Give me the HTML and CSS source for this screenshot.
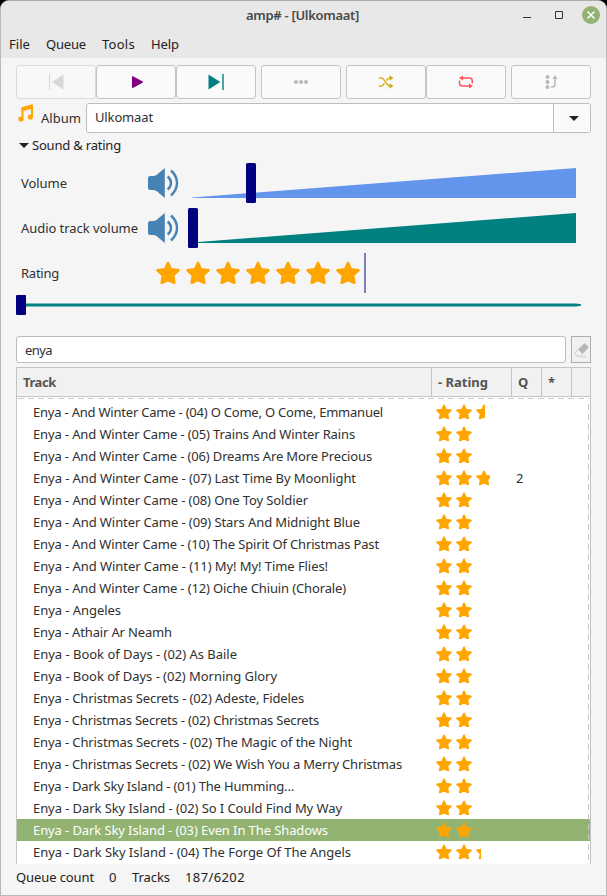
FILE: index.html
```html
<!DOCTYPE html>
<html lang="en">
<head>
<meta charset="utf-8">
<title>amp# - [Ulkomaat]</title>
<link rel="stylesheet" href="styles.css">
</head>
<body>
<svg class="defs" width="0" height="0" aria-hidden="true">
  <symbol id="star" viewBox="0 0 24 24"><path d="M12 2 14.800 8.300 22.500 9.400 17.100 14.300 18.300 21.700 12 19 5.700 21.700 6.900 14.300 1.500 9.400 9.200 8.300Z" fill="#ffa500" stroke="#ffa500" stroke-width="2.600" stroke-linejoin="round"/></symbol>
  <symbol id="speaker" viewBox="0 0 32 32"><path d="M1 11.500Q1 9 3.500 9H6Q8 9 9.500 8L17.800 1V31L9.500 24Q8 23 6 23H3.500Q1 23 1 20.500Z" fill="#4682b4"/><path d="M20.700 9.500Q24 12.500 24 16T20.700 22.500M24 3.500Q30 9 30 16T24 28.500" fill="none" stroke="#4682b4" stroke-width="2.400"/></symbol>
</svg>
<div class="window">
  <header class="titlebar">
    <h1 class="title">amp# - [Ulkomaat]</h1>
    <div class="controls">
      <svg width="72" height="20" viewBox="0 0 72 20"><path d="M0 12.500H8" stroke="#333"/><path d="M32.500 6.500H39.500V13.500H32.500Z" fill="none" stroke="#333"/></svg>
      <svg class="close" width="18" height="18" viewBox="0 0 18 18"><circle cx="9" cy="9" r="9" fill="#92b372"/><path d="M5.500 5.500 12.500 12.500M12.500 5.500 5.500 12.500" stroke="#fff" stroke-width="1.500"/></svg>
    </div>
  </header>
  <nav class="menu"><span class="m1">File</span><span class="m2">Queue</span><span class="m3">Tools</span><span class="m4">Help</span></nav>
  <main class="content">
    <div class="toolbar">
      <button class="tool dim"><svg width="16" height="16"><path d="M1.500 0V16" stroke="#d5d8d4"/><path d="M15.500 0.500V15.500L4 8Z" fill="#d5d8d4"/></svg></button>
      <button class="tool"><svg width="16" height="16"><path d="M4.500 2.500 14.800 8.100 4.500 13.700Z" fill="#800080" stroke="#800080" stroke-linejoin="round"/></svg></button>
      <button class="tool gap"><svg width="16" height="16"><path d="M0.500 0.500 12.300 8 0.500 15.500Z" fill="#008080"/><path d="M15 0V16" stroke="#008080" stroke-width="1.400"/></svg></button>
      <button class="tool gap"><svg width="16" height="16" fill="#b4bab3"><circle cx="3" cy="8" r="2"/><circle cx="8" cy="8" r="2"/><circle cx="13" cy="8" r="2"/></svg></button>
      <button class="tool"><svg width="16" height="16"><path d="M0.800 4H3C7 4 8 12 12 12M0.800 12H3C4.500 12 5.500 11 6.500 9.500M8.500 6.500Q10 4 12 4" fill="none" stroke="#dbb21c" stroke-width="1.500"/><path d="M11.500 1.200 15.500 4 11.500 6.800ZM11.500 9.200 15.500 12 11.500 14.800Z" fill="#d5ac10"/></svg></button>
      <button class="tool gap"><svg width="16" height="16"><path d="M4 4H11.500Q14.300 4 14.300 7V9.500M12 12H4.500Q1.500 12 1.500 9V6.500" fill="none" stroke="#ff5757" stroke-width="1.500"/><path d="M5 1.500 1 4 5 6.500ZM11 9.500 15 12 11 14.500Z" fill="#ff5757"/></svg></button>
      <button class="tool"><svg width="16" height="16" fill="#b4bab3"><circle cx="4.500" cy="3" r="2"/><circle cx="4.500" cy="8" r="2"/><circle cx="4.500" cy="13" r="2"/><path d="M8 13H9Q12 13 12 10V4" fill="none" stroke="#b4bab3" stroke-width="1.500"/><path d="M9.500 5 12 1 14.500 5Z"/></svg></button>
    </div>
    <div class="album">
      <svg class="note" width="20" height="20" viewBox="0 0 20 20"><path d="M6.500 15V5.500L16 3V13" fill="none" stroke="#ffa500" stroke-width="2"/><path d="M5.500 5Q5.500 4.200 6.500 3.900L15.500 1.600Q17 1.300 17 2.500V5.500L5.500 8.500Z" fill="#ffa500"/><circle cx="5" cy="16" r="2.600" fill="#ffa500"/><circle cx="14.400" cy="14" r="2.600" fill="#ffa500"/></svg>
      <label class="album-label">Album</label>
      <div class="combo"><span class="combo-text">Ulkomaat</span><span class="combo-button"><i class="arrow"></i></span></div>
    </div>
    <div class="expander"><i class="arrow"></i><span>Sound &amp; rating</span></div>
    <section class="sliders">
      <div class="slider-row"><span class="slider-name n1">Volume</span><svg class="speaker" width="32" height="32"><use href="#speaker"/></svg><svg class="wedge" width="390" height="40"><path d="M4 34.400 388 5V35H4Z" fill="#6495ed"/><rect x="58" y="0" width="10" height="40" rx="1.500" fill="#000080"/></svg></div>
      <div class="slider-row"><span class="slider-name n2">Audio track volume</span><svg class="speaker" width="32" height="32"><use href="#speaker"/></svg><svg class="wedge" width="390" height="40"><path d="M4 34.400 388 5V35H4Z" fill="#008080"/><rect x="0" y="0" width="10" height="40" rx="1.500" fill="#000080"/></svg></div>
      <div class="slider-row"><span class="slider-name n3">Rating</span><div class="big-stars" id="bigStars"></div></div>
    </section>
    <svg class="progress" width="575" height="20"><path d="M5 8.500H560L565 9.300V10.700L560 11.500H5Z" fill="#008080"/><rect x="0" y="0" width="10" height="20" rx="1" fill="#000080"/></svg>
    <div class="search"><div class="search-field">enya</div><button class="erase"><svg width="18" height="20" viewBox="0 0 18 20"><path d="M6 9.500 12 3.500Q12.700 3 13.300 3.500L16.300 6.700Q16.800 7.300 16.300 8L10.300 14Z" fill="#b4bab3"/><path d="M5.800 9.800 3 12.800Q2.500 13.500 3 14L5.300 16.300H8L10 14.300M9 16.800H14" fill="none" stroke="#c2c7c1" stroke-width="1"/></svg></button></div>
    <section class="table">
      <div class="head"><span>Track</span><span>- Rating</span><span>Q</span><span>*</span><span></span></div>
      <div class="body" id="rows"></div>
    </section>
    <footer class="status"><span class="s1">Queue count</span><span class="s2">0</span><span class="s3">Tracks</span><span class="s4">187/6202</span></footer>
  </main>
</div>
<script src="app.js"></script>
</body>
</html>
```
FILE: styles.css
```css
* { box-sizing: border-box; }
body { margin: 0; background: #000; color: #303030; font: 13px/20px "Noto Sans", sans-serif; overflow: hidden; }
svg { display: block; flex: none; }
.defs { position: absolute; }
.window { width: 607px; height: 896px; border: 1px solid #b9b9b9; border-top: 1px solid #acacac; border-radius: 9px 9px 0 0; background: #f5f5f5; overflow: hidden; }
.titlebar { height: 29px; background: #e8e8e8; display: flex; position: relative; }
.title { flex: 1; margin: 0; padding-right: 2px; font-size: 13px; line-height: 29px; font-weight: 600; text-align: center; color: #484848; }
.controls { position: absolute; left: 522px; top: 4px; display: flex; }
.close { margin-left: -13px; margin-top: 1px; }
.menu { height: 28px; background: #e8e8e8; display: flex; padding: 4px 0 0 8px; color: #222; }
.menu span { flex: none; white-space: nowrap; }
.m1 { width: 37px; } .m2 { width: 56px; } .m3 { width: 49px; }
.content { padding: 7px 15px 0; display: flex; flex-direction: column; }
.toolbar { display: flex; height: 34px; }
.tool { width: 80px; height: 34px; flex: none; padding: 0; border: 1px solid #c5c5c5; border-radius: 3px; background: #fafafa; display: flex; align-items: center; justify-content: center; }
.tool.dim { border-color: #dcdcdc; background: #f8f8f8; }
.tool.gap { margin-right: 5px; }
.album { display: flex; height: 30px; margin-top: 4px; }
.note { margin: 0 5px 0 0; }
.album-label { width: 45px; padding-top: 5px; flex: none; }
.combo { flex: 1; display: flex; border: 1px solid #bdbdbd; border-radius: 3px; background: #fff; overflow: hidden; }
.combo-text { flex: 1; padding: 3px 8px; }
.combo-button { width: 37px; border-left: 1px solid #bdbdbd; background: #fafafa; display: flex; align-items: center; justify-content: center; padding-left: 4px; }
.arrow { border: 5px solid transparent; border-top-color: #222; border-bottom: 0; }
.expander { height: 20px; margin: 2px 0 0 3px; display: flex; align-items: center; gap: 3px; color: #222; }
.sliders { padding: 8px 0 0 5px; }
.slider-row { height: 45px; display: flex; align-items: flex-start; }
.slider-name { width: 126px; padding-top: 10px; flex: none; white-space: nowrap; }
.speaker { margin-top: 4px; }
.wedge { margin-left: 9px; }
.big-stars { display: flex; height: 40px; padding: 8px 4px 0 9px; border-right: 2px solid #7f7fc0; gap: 6px; }
.progress { margin-top: -3px; }
.search { display: flex; height: 27px; margin-top: 21px; gap: 5px; }
.search-field { flex: 1; border: 1px solid #bdbdbd; border-radius: 3px; background: #fff; padding: 3px 8px; }
.erase { width: 20px; padding: 0; border: 1px solid #adadad; background: #f1f1f1; display: flex; align-items: center; justify-content: center; }
.table { height: 497px; margin-top: 4px; border: 1px solid #c4c4c4; border-bottom: 0; background: #fff; display: flex; flex-direction: column; }
.head { height: 29px; flex: none; display: grid; grid-template-columns: 415px 80px 30px 30px 1fr; background: #f1f1f1; border-bottom: 1px solid #c4c4c4; color: #555; font-weight: 700; line-height: 29px; }
.head span { border-right: 1px solid #c4c4c4; padding-left: 6px; white-space: nowrap; }
.head span:last-child { border: 0; }
.body { flex: 1; overflow: hidden; padding-top: 4px; position: relative; }
.body::before { content: ""; position: absolute; inset: 1px 1px 0 0; background: repeating-linear-gradient(90deg, #c8c8c8 0 6px, transparent 6px 10px) 1px 0 / 100% 1px no-repeat, repeating-linear-gradient(180deg, #c8c8c8 0 6px, transparent 6px 10px) 100% 6px / 1px 100% no-repeat; pointer-events: none; z-index: 1; }
.row { height: 22px; display: grid; grid-template-columns: 418px 81px 1fr; line-height: 22px; }
.row:not(.selected) { background: #fff; }
.row.selected { background: #92b372; color: #fff; }
.track { padding-left: 16px; white-space: nowrap; }
.stars { display: flex; gap: 4px; padding: 3px 0 0 1px; }
.clip { overflow: hidden; flex: none; }
.status { display: flex; height: 28px; padding-top: 3px; color: #222; }
.status span { flex: none; white-space: nowrap; }
.s1 { width: 93px; } .s2 { width: 23px; } .s3 { width: 53px; }
```
FILE: app.js
```js
// [track, displayed text width, stars, queue position]
const tracks = [
  ["And Winter Came - (04) O Come, O Come, Emmanuel", 350, 2.58, ""],
  ["And Winter Came - (05) Trains And Winter Rains", 322, 2, ""],
  ["And Winter Came - (06) Dreams Are More Precious", 339, 2, ""],
  ["And Winter Came - (07) Last Time By Moonlight", 323, 2.86, "2"],
  ["And Winter Came - (08) One Toy Soldier", 275, 2, ""],
  ["And Winter Came - (09) Stars And Midnight Blue", 327, 2, ""],
  ["And Winter Came - (10) The Spirit Of Christmas Past", 346, 2, ""],
  ["And Winter Came - (11) My! My! Time Flies!", 295, 2, ""],
  ["And Winter Came - (12) Oiche Chiuin (Chorale)", 313, 2, ""],
  ["Angeles", 88, 2, ""],
  ["Athair Ar Neamh", 139, 2, ""],
  ["Book of Days - (02) As Baile", 204, 2, ""],
  ["Book of Days - (02) Morning Glory", 244, 2, ""],
  ["Christmas Secrets - (02) Adeste, Fideles", 271, 2, ""],
  ["Christmas Secrets - (02) Christmas Secrets", 286, 2, ""],
  ["Christmas Secrets - (02) The Magic of the Night", 319, 2, ""],
  ["Christmas Secrets - (02) We Wish You a Merry Christmas", 369, 2, ""],
  ["Dark Sky Island - (01) The Humming...", 261, 2, ""],
  ["Dark Sky Island - (02) So I Could Find My Way", 309, 2, ""],
  ["Dark Sky Island - (03) Even In The Shadows", 295, 2.07, ""],
  ["Dark Sky Island - (04) The Forge Of The Angels", 318, 2.3, ""]
];

function star(size, part) {
  return `<div class="clip" style="width:${Math.round(size * part)}px;height:${size}px"><svg width="${size}" height="${size}"><use href="#star"/></svg></div>`;
}

document.getElementById("bigStars").innerHTML = star(24, 1).repeat(7);

document.getElementById("rows").innerHTML = tracks.map(([name, width, rating, queue], i) => {
  const whole = Math.floor(rating);
  const part = rating - whole;
  const stars = star(16, 1).repeat(whole) + (part ? star(16, part) : "");
  return `<div class="row${i === 19 ? " selected" : ""}"><span class="track"><span class="fit" data-width="${width}">Enya - ${name}</span></span><div class="stars">${stars}</div><span>${queue}</span></div>`;
}).join("");

function fit(el, width) {
  const range = document.createRange();
  range.selectNodeContents(el);
  const natural = range.getBoundingClientRect().width;
  el.style.letterSpacing = ((width - natural) / el.textContent.length).toFixed(3) + "px";
}
document.querySelectorAll(".fit").forEach(el => fit(el, Number(el.dataset.width)));
[[".title", 113], [".m1", 21], [".m2", 40], [".m3", 33], [".m4", 28], [".album-label", 40], [".combo-text", 58],
 [".expander span", 89], [".n1", 46], [".n2", 117], [".n3", 38], [".search-field", 27], [".s1", 78], [".s3", 38], [".s4", 60],
 [".head span:nth-child(1)", 33], [".head span:nth-child(2)", 50]
].forEach(([selector, width]) => fit(document.querySelector(selector), width));
```
